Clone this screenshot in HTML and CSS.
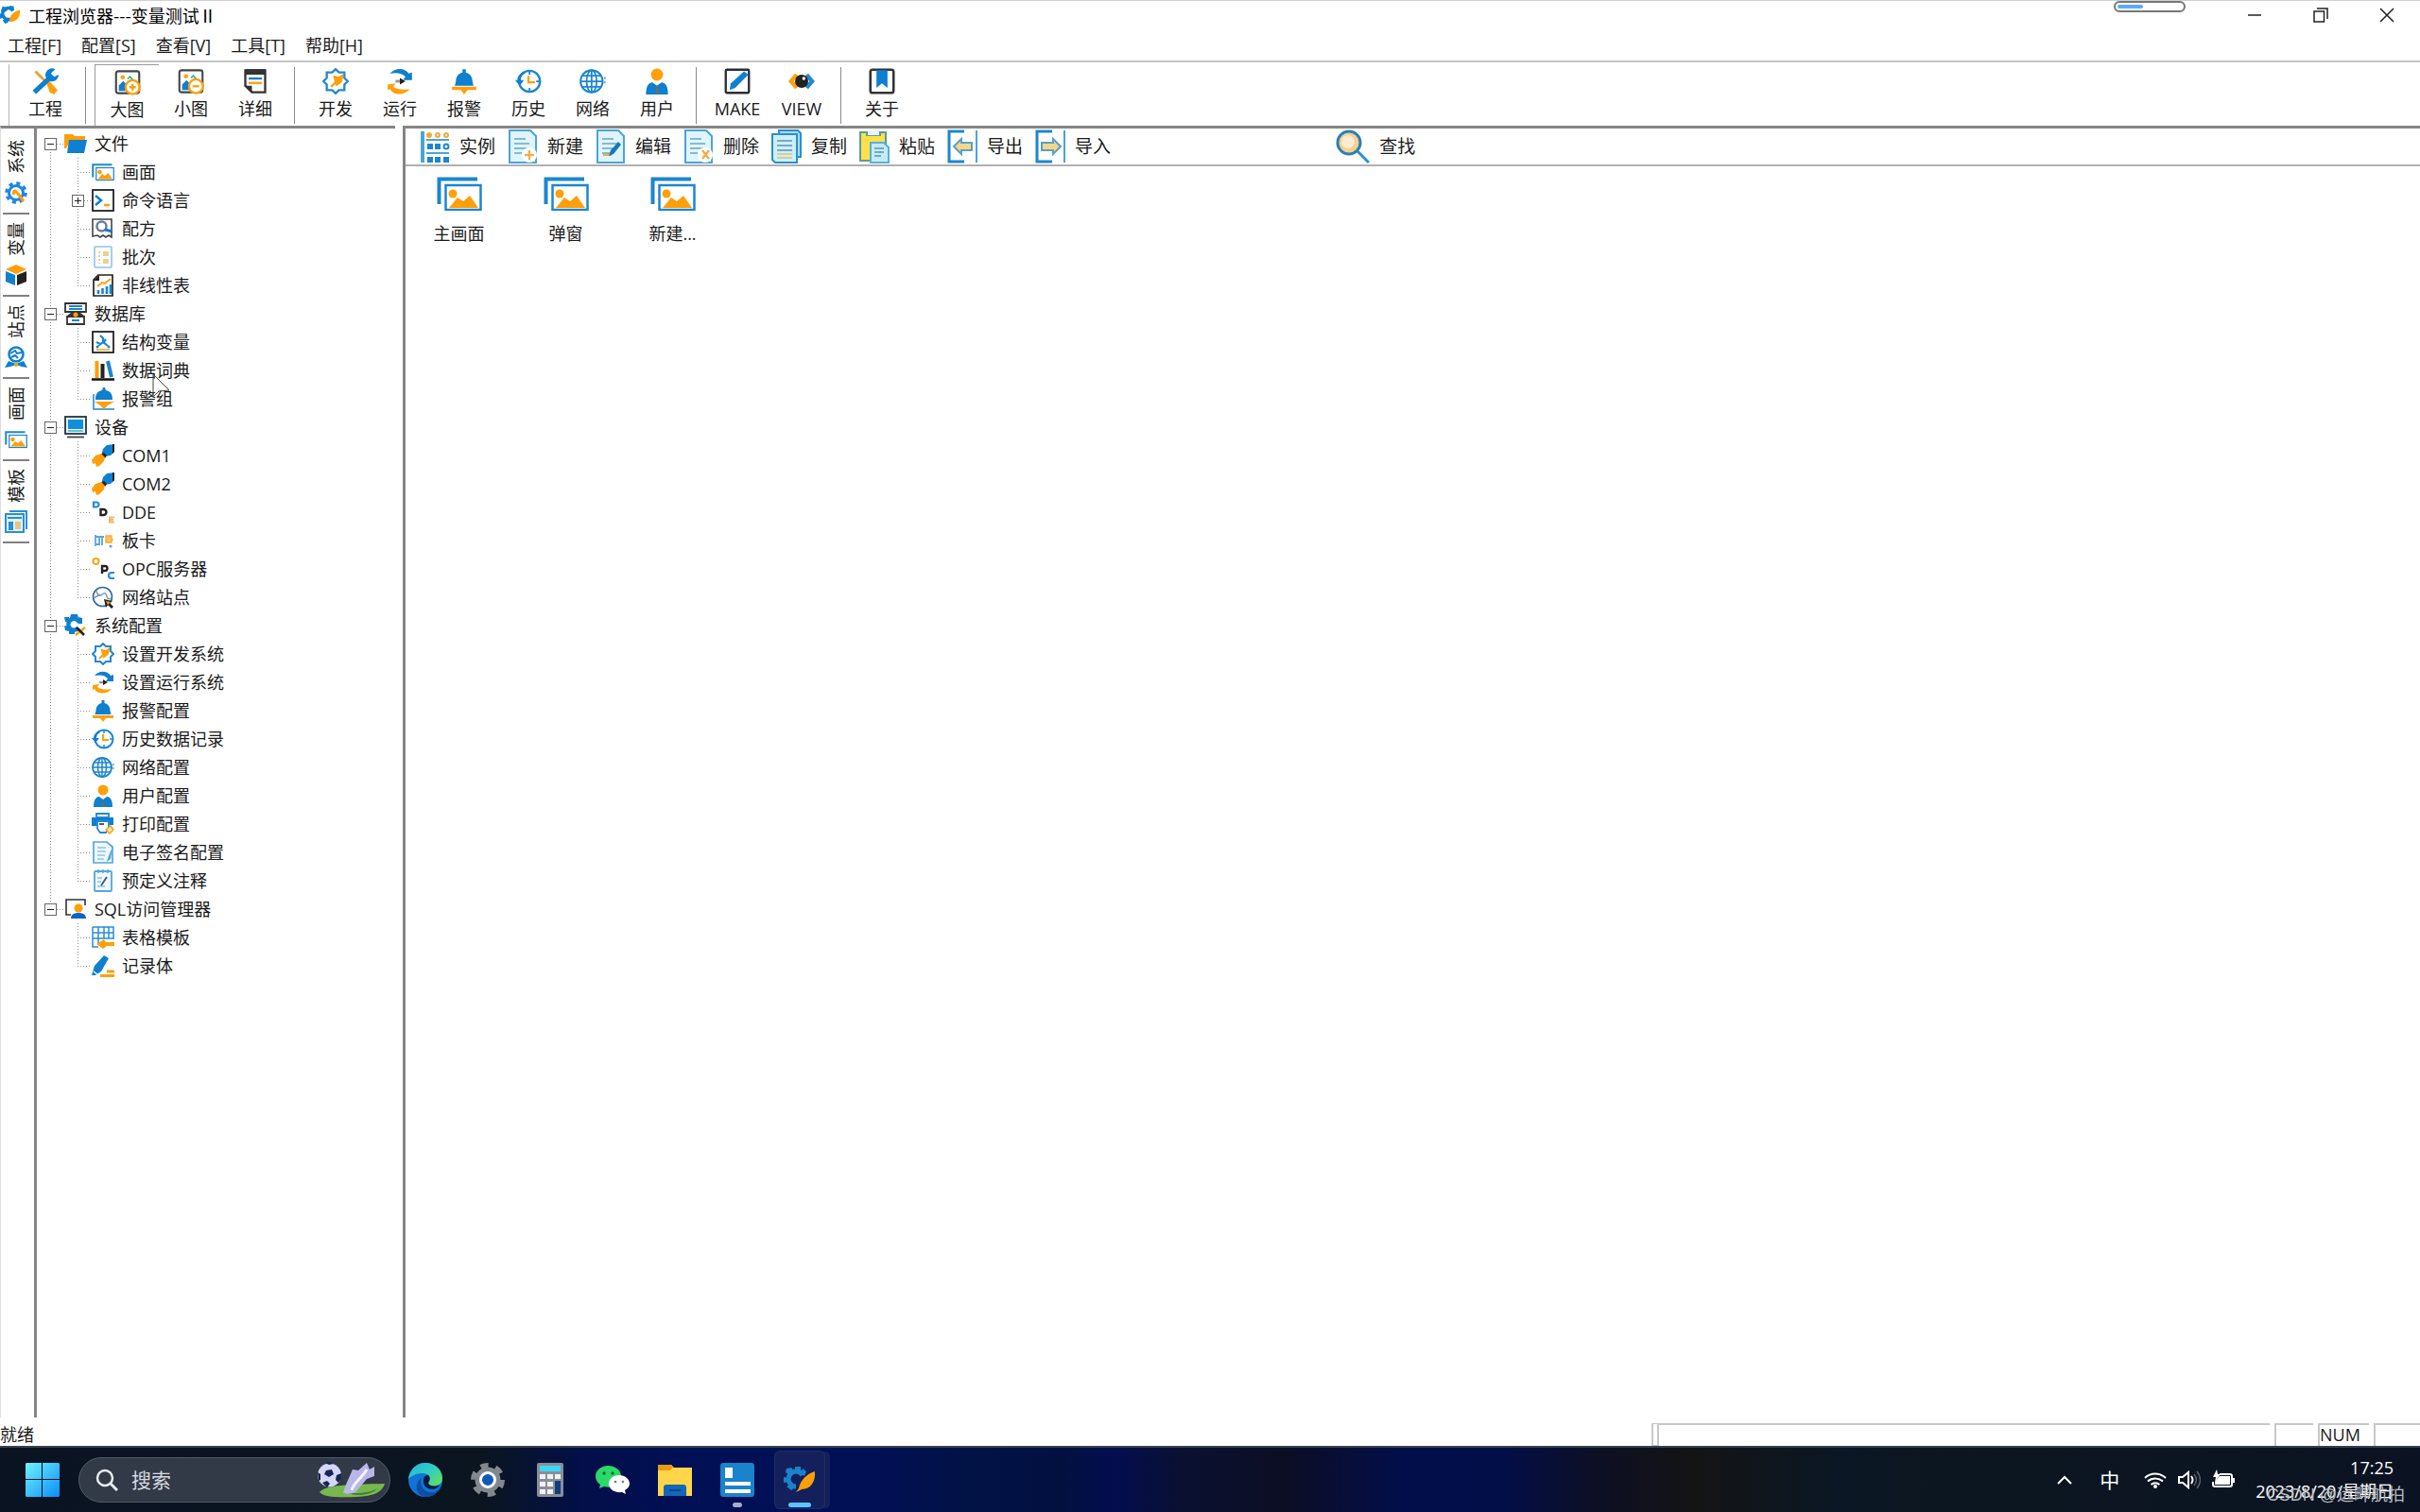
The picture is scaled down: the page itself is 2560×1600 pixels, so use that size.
FILE: index.html
```html
<!DOCTYPE html>
<html lang="zh-CN">
<head>
    <meta charset="UTF-8">
    <meta name="viewport" content="width=device-width, initial-scale=1.0">
    <title>工程浏览器---变量测试Ⅱ</title>
    <link rel="stylesheet" href="styles.css">
</head>
<body>
    <!-- Shared icons -->
    <svg class="sprite" aria-hidden="true">
        <symbol id="logo" viewBox="0 0 24 24">
            <path d="M12 16.500A6.500 6.500 0 1 1 15 7" fill="none" stroke="#0f7fd0" stroke-width="4"/>
            <path d="M3 2l4 1 2 3-4 3-4-2zM0 10l4 1v4l-4 1zM11 1l5 1v4l-5-1zM3 18l4-2 3 4-4 2z" fill="#0f7fd0"/>
            <path d="M23 6c-8 2-12 6-12 14 8 0 13-6 12-14z" fill="#ff9f0a"/>
        </symbol>
        <symbol id="tools" viewBox="0 0 24 24">
            <path d="M3 3l9 9" stroke="#e7a33a" stroke-width="2.500"/>
            <path d="M13 14l3-2 7 8-3 4-4-2z" fill="#ff9f0a"/>
            <path d="M2 22L17 8" stroke="#0f7fd0" stroke-width="4.500"/>
            <path d="M21 1a6 6 0 1 0 3 5l-4 2-3-3z" fill="#0f7fd0"/>
        </symbol>
        <symbol id="pic" viewBox="0 0 24 24">
            <rect x="1.500" y="2" width="21" height="20" rx="2" fill="#fff" stroke="#444" stroke-width="1.800"/>
            <circle cx="7.500" cy="7.500" r="2" fill="#ff9f0a"/>
            <path d="M4 20v-5l4-4 3 3v6z" fill="#0f7fd0"/>
            <path d="M12 9l2-2 3 3" fill="none" stroke="#2b9" stroke-width="1.500"/>
        </symbol>
        <symbol id="pic-plus" viewBox="0 0 24 24">
            <use href="#pic"/>
            <circle cx="16.500" cy="16.500" r="6.300" fill="#fff" stroke="#ff9f0a" stroke-width="2"/>
            <path d="M16.500 13.500v6M13.500 16.500h6" stroke="#ff9f0a" stroke-width="2"/>
        </symbol>
        <symbol id="pic-minus" viewBox="0 0 24 24">
            <use href="#pic"/>
            <circle cx="16.500" cy="16.500" r="6.300" fill="#fff" stroke="#ff9f0a" stroke-width="2"/>
            <path d="M13.500 16.500h6" stroke="#ff9f0a" stroke-width="2"/>
        </symbol>
        <symbol id="notepad" viewBox="0 0 24 24">
            <path d="M3 2h18v20H9l-6-6z" fill="#fff" stroke="#333" stroke-width="2"/>
            <path d="M3 1h18v5H3z" fill="#333"/>
            <path d="M2 16h7v7z" fill="#333"/>
            <path d="M6 9.500h12" stroke="#0f7fd0" stroke-width="2"/>
            <path d="M6 13.500h12" stroke="#ff9f0a" stroke-width="2"/>
        </symbol>
        <symbol id="dev" viewBox="0 0 24 24">
            <path d="M12 1l3 3h5v5l3 3-3 3v5h-5l-3 3-3-3H4v-5l-3-3 3-3V4h5z" fill="#fff" stroke="#2389cf" stroke-width="2"/>
            <path d="M8 17l5-5M12 12l-1-4 4 1 3-2-1 5-4 3z" fill="#ff9f0a" stroke="#ff9f0a" stroke-width="2"/>
        </symbol>
        <symbol id="run" viewBox="0 0 24 24">
            <path d="M3 5C8-1 17 0 20 5l3-1v7h-8l2-3C14 4 8 4 3 5z" fill="#0f7fd0"/>
            <path d="M21 19C16 25 6 25 3 19l-2 1v-5l7-1-2 3c4 3 10 3 15 2z" fill="#ff9f0a"/>
            <path d="M8 12h5" stroke="#999" stroke-width="2.500"/>
            <path d="M12 9l5 3-5 3z" fill="#222"/>
        </symbol>
        <symbol id="bell" viewBox="0 0 24 24">
            <path d="M10.500 1h3v3c4 1 6 4 6 8l1 4h-17l1-4c0-4 2-7 6-8z" fill="#0f7fd0"/>
            <path d="M1 17h22v3h-8l-3 4-3-4H1z" fill="#ff9f0a"/>
        </symbol>
        <symbol id="history" viewBox="0 0 24 24">
            <circle cx="13" cy="12" r="9.500" fill="#fff" stroke="#1c86cf" stroke-width="2"/>
            <path d="M13 3v3M13 18v3M19 12h3" stroke="#1c86cf" stroke-width="1.500"/>
            <path d="M8 3C4 5 2 8 2 11H0l4 5 4-5H5c0-3 1-5 4-6z" fill="#0f7fd0"/>
            <path d="M12 7v6h6" fill="none" stroke="#ff9f0a" stroke-width="2"/>
        </symbol>
        <symbol id="globe" viewBox="0 0 24 24">
            <circle cx="11" cy="12" r="10" fill="#fff" stroke="#1c86cf" stroke-width="1.800"/>
            <ellipse cx="11" cy="12" rx="4.500" ry="10" fill="none" stroke="#1c86cf" stroke-width="1.500"/>
            <path d="M11 2v20M1 12h20M3 7h16M3 17h16" stroke="#1c86cf" stroke-width="1.500"/>
            <path d="M23 8v8" stroke="#7fa9c4" stroke-width="1.500" stroke-dasharray="2 2"/>
        </symbol>
        <symbol id="user" viewBox="0 0 24 24">
            <circle cx="12" cy="6" r="5.500" fill="#ff9f0a"/>
            <path d="M2 24c0-7 2-11 6-11l4 3 4-3c4 0 6 4 6 11z" fill="#0f7fd0"/>
            <path d="M12 15l1.500 8h-3z" fill="#786c50"/>
        </symbol>
        <symbol id="make" viewBox="0 0 24 24">
            <rect x="1.500" y="1.500" width="21" height="21" rx="1" fill="#fff" stroke="#2b2b38" stroke-width="2"/>
            <path d="M5 20l1-6L18 3l4 3L10 18z" fill="#0f7fd0"/>
        </symbol>
        <symbol id="view" viewBox="0 0 24 24">
            <path d="M0 12l6-7 3 2-4 5 4 5-3 2z" fill="#ff9f0a"/>
            <path d="M24 12l-6-7-3 2 4 5-4 5 3 2z" fill="#2389cf"/>
            <circle cx="12" cy="12" r="6" fill="#222"/>
            <circle cx="14" cy="9.500" r="1.500" fill="#fff"/>
        </symbol>
        <symbol id="about" viewBox="0 0 24 24">
            <rect x="1.500" y="1.500" width="21" height="21" rx="2" fill="#fff" stroke="#333" stroke-width="2.200"/>
            <path d="M7 2h10v16l-5-4-5 4z" fill="#0f7fd0"/>
        </symbol>
        <symbol id="folder" viewBox="0 0 24 24">
            <path d="M0 2h9l2 2h11v4H7L2 17H0z" fill="#ff9f0a"/>
            <path d="M5 8h19l-3 14H3z" fill="#0f7fd0"/>
        </symbol>
        <symbol id="pictures" viewBox="0 0 48 36">
            <path d="M2.500 29V2.500H43" fill="none" stroke="#1c86cf" stroke-width="4"/>
            <rect x="9.500" y="9" width="37" height="26" fill="#fff" stroke="#1c86cf" stroke-width="2.500"/>
            <circle cx="17" cy="18" r="4.500" fill="#ff9f0a"/>
            <path d="M13 33l9-11 6 4 7-6 9 13z" fill="#ff9f0a"/>
        </symbol>
        <symbol id="cmd" viewBox="0 0 24 24">
            <rect x="1" y="1" width="22" height="22" fill="#fff" stroke="#222" stroke-width="1.800"/>
            <path d="M4 7l6 5-6 5" fill="none" stroke="#0f7fd0" stroke-width="2.500"/>
            <path d="M13 17h6" stroke="#ff9f0a" stroke-width="2.500"/>
        </symbol>
        <symbol id="recipe" viewBox="0 0 24 24">
            <path d="M1 2h20v19l-3-2-3 2-3-2-3 2-3-2-5 1z" fill="#fff" stroke="#444" stroke-width="1.600"/>
            <circle cx="10.500" cy="9.500" r="5" fill="#fff" stroke="#6a7f96" stroke-width="2.500"/>
            <path d="M14 13l8 2" stroke="#1c76c9" stroke-width="3"/>
        </symbol>
        <symbol id="batch" viewBox="0 0 24 24">
            <rect x="3" y="1" width="18" height="22" rx="1" fill="#fff" stroke="#8cc4ea" stroke-width="1.600"/>
            <path d="M8 6v13" stroke="#e7bd77" stroke-width="1.500" stroke-dasharray="2 2"/>
            <path d="M12 6h6v5h-6zM12 14h6v5h-6z" fill="#edcf95"/>
        </symbol>
        <symbol id="chart" viewBox="0 0 24 24">
            <path d="M7 1h15v22H2V6z" fill="#fff" stroke="#222" stroke-width="1.700"/>
            <path d="M8 1v6H2z" fill="#222"/>
            <path d="M7 21v-4M11.500 21v-6M16 21v-8M20 21V11" stroke="#1c86cf" stroke-width="2.600"/>
            <path d="M6 13l5-4 3 1 6-5" fill="none" stroke="#ff9f0a" stroke-width="2"/>
        </symbol>
        <symbol id="database" viewBox="0 0 24 24">
            <path d="M1 1h22v9H1zM3 15h18v8H3z" fill="#fff" stroke="#333" stroke-width="1.800"/>
            <path d="M5 4h14M5 7h14M8 19h8" stroke="#1c86cf" stroke-width="2"/>
            <path d="M3 14l4-3h10l4 3z" fill="#333"/>
            <circle cx="12" cy="13" r="2.500" fill="#ff9f0a"/>
        </symbol>
        <symbol id="struct" viewBox="0 0 24 24">
            <rect x="1" y="1" width="22" height="22" fill="#fff" stroke="#222" stroke-width="1.800"/>
            <path d="M9 5l3 3v5M7 16l5-4 5 4M5 12l4 2M15 9l-3 4" fill="none" stroke="#1c86cf" stroke-width="2.200"/>
            <circle cx="6" cy="17" r="1.500" fill="#1c86cf"/><circle cx="18" cy="17" r="1.500" fill="#1c86cf"/>
            <path d="M5 20h14" stroke="#ff9f0a" stroke-width="1.500"/>
        </symbol>
        <symbol id="books" viewBox="0 0 24 24">
            <path d="M5.500 2v18" stroke="#ff9f0a" stroke-width="4"/>
            <path d="M11.500 5v15" stroke="#222" stroke-width="4"/>
            <path d="M17 2l4 17" stroke="#1c86cf" stroke-width="4"/>
            <path d="M0 21.500h24" stroke="#111" stroke-width="2.500"/>
        </symbol>
        <symbol id="alarm-group" viewBox="0 0 24 24">
            <path d="M2 7v16h22" fill="none" stroke="#1c86cf" stroke-width="1.500"/>
            <path d="M12 0h2l1 3c5 1 7 4 7 10H4c0-6 2-9 7-10z" fill="#0f7fd0"/>
            <path d="M3 15h21l-7 4-4 4-4-4z" fill="#ff9f0a"/>
        </symbol>
        <symbol id="device" viewBox="0 0 24 24">
            <rect x="1" y="1" width="22" height="18" fill="#e9f5fb" stroke="#234" stroke-width="1.800"/>
            <path d="M4 4h16v10H4z" fill="#0f8fdc"/>
            <path d="M4 16h16" stroke="#3bb3c0" stroke-width="1.500"/>
            <path d="M3 22.500h18" stroke="#444" stroke-width="1.800"/>
        </symbol>
        <symbol id="com" viewBox="0 0 24 24">
            <path d="M10 12l2-7 4-4 8-1v8l-4 4-6 1z" fill="#0f7fd0"/>
            <path d="M22 0h2v8l-2 2zM10 11l3-2 3 3-2 3z" fill="#222"/>
            <path d="M0 17l4-5 6-2 4 4-1 4-5 5-3 1-1-4-3 1z" fill="#ff9f0a"/>
        </symbol>
        <symbol id="dde" viewBox="0 0 24 24">
            <path d="M2 1.500h3a2.500 2.500 0 0 1 0 5H2z" fill="none" stroke="#2389dc" stroke-width="2.200"/>
            <path d="M9.500 9h3a3 3 0 0 1 0 6h-3z" fill="none" stroke="#222" stroke-width="2.400"/>
            <path d="M24 17.500h-5v5h5M19 20h4" fill="none" stroke="#f5b566" stroke-width="2"/>
        </symbol>
        <symbol id="board" viewBox="0 0 24 24">
            <path d="M4 6v12M4 8h9M4 16h5M8 9v6M11 9v8" fill="none" stroke="#5ba5e0" stroke-width="1.800"/>
            <path d="M15 7h6v7h-6zM14 14h2M21 11h2" fill="#f7c170" stroke="#ffac33" stroke-width="1.500"/>
            <circle cx="20" cy="18" r="1.600" fill="#5ba5e0"/>
        </symbol>
        <symbol id="opc" viewBox="0 0 24 24">
            <circle cx="4.500" cy="4" r="3" fill="none" stroke="#f3aa22" stroke-width="2.200"/>
            <path d="M11 17V9h3a2.500 2.500 0 0 1 0 5h-3" fill="none" stroke="#222" stroke-width="2.400"/>
            <path d="M24 16h-3a3 3 0 0 0 0 6h3" fill="none" stroke="#2389dc" stroke-width="2.200"/>
        </symbol>
        <symbol id="net-site" viewBox="0 0 24 24">
            <circle cx="11.500" cy="11.500" r="10" fill="#fff" stroke="#33699a" stroke-width="1.600"/>
            <path d="M5 5c1 6 4 6 6 4s4-2 5 2 4 3 5 1M2 13l7-4" fill="none" stroke="#7d9ab5" stroke-width="1.500"/>
            <path d="M13 14l9 2-3 2 4 4-2 2-4-4-2 3z" fill="#222"/>
            <path d="M15 16l5 1-3 3z" fill="#ff9f0a"/>
        </symbol>
        <symbol id="sys" viewBox="0 0 24 24">
            <path d="M15 14.500A6 6 0 1 1 16 9" fill="none" stroke="#0f7fd0" stroke-width="4.500"/>
            <path d="M7 0h7l1 4H6zM0 3h5v5H1zM0 12l5 1v5l-4-1zM5 17h6v4H5zM15 3l4 1v6h-4z" fill="#0f7fd0"/>
            <path d="M12 22l10-8" stroke="#ff9f0a" stroke-width="2.500"/>
            <path d="M13 14l8 8" stroke="#222" stroke-width="2.500"/>
        </symbol>
        <symbol id="print" viewBox="0 0 24 24">
            <path d="M5 1h13v4H5z" fill="#fff" stroke="#2389cf" stroke-width="1.800"/>
            <path d="M0 5h23v8h-5V9H6v5H0z" fill="#0f7fd0"/>
            <path d="M6 9h12v8l-3 4H9l-3-4z" fill="#fff" stroke="#2389cf" stroke-width="1.800"/>
            <path d="M8 12h5" stroke="#222" stroke-width="1.500"/>
            <path d="M20 14l3 4-4 4-4-4z" fill="#ffe5bb" stroke="#ff9f0a" stroke-width="1.500"/>
        </symbol>
        <symbol id="sign" viewBox="0 0 24 24">
            <path d="M2 1h14l6 5v17H2z" fill="#eef8fe" stroke="#55a8d8" stroke-width="1.700"/>
            <path d="M6 7h9M6 11h9M6 15h8M6 19h7" stroke="#8cc4ea" stroke-width="1.400"/>
            <path d="M22 6l-5 12-1 4 4-3z" fill="#55a8d8"/>
        </symbol>
        <symbol id="note" viewBox="0 0 24 24">
            <rect x="3" y="2" width="18" height="21" rx="1" fill="#eef8fe" stroke="#55a8d8" stroke-width="1.800"/>
            <path d="M7 0v4M12 0v4M17 0v4" stroke="#55a8d8" stroke-width="1.400"/>
            <path d="M6 9h5M6 13h4M6 18h8" stroke="#8cc4ea" stroke-width="1.400"/>
            <path d="M16 8l-6 9" stroke="#456" stroke-width="1.800"/>
        </symbol>
        <symbol id="sql" viewBox="0 0 24 24">
            <path d="M7 18H2V2h20v6" fill="none" stroke="#333" stroke-width="1.600"/>
            <circle cx="15" cy="11" r="4.500" fill="#ff9f0a"/>
            <path d="M7 22c0-4 3-6 8-6s8 2 8 6z" fill="#0f62c8"/>
        </symbol>
        <symbol id="table-tpl" viewBox="0 0 24 24">
            <path d="M1 1h22v13M1 1v21h6M1 7h22M1 13h22M7 1v18M13 1v12M18 1v12" fill="none" stroke="#2a8fd0" stroke-width="1.500"/>
            <path d="M5 19l8-5 2 3h9v4h-8l-4 3z" fill="#ff9f0a"/>
        </symbol>
        <symbol id="record" viewBox="0 0 24 24">
            <path d="M0 22l3-10L13 1l5 3-8 14-6 4z" fill="#0f7fd0"/>
            <path d="M2 18l5 4" stroke="#dff" stroke-width="1.500"/>
            <path d="M16 18h8M9 22.500h15" stroke="#ff9f0a" stroke-width="2.800"/>
        </symbol>
        <symbol id="sys-gear" viewBox="0 0 24 24">
            <circle cx="12" cy="12" r="10" fill="none" stroke="#1c86e8" stroke-width="3.500" stroke-dasharray="4 3.850"/>
            <circle cx="12" cy="12" r="7.500" fill="#fff" stroke="#1c86e8" stroke-width="3"/>
            <path d="M10 9l4 4 6 8M10 9l-1 5" fill="none" stroke="#ff9f0a" stroke-width="3"/>
        </symbol>
        <symbol id="cube" viewBox="0 0 24 24">
            <path d="M12 1l11 5-11 5L1 6z" fill="#ff9f0a"/>
            <path d="M1 8l10 4v11L1 19z" fill="#0f7fd0"/>
            <path d="M23 8l-10 4v11l10-4z" fill="#222"/>
        </symbol>
        <symbol id="station" viewBox="0 0 24 24">
            <circle cx="12" cy="9" r="7.500" fill="#fff" stroke="#0f7fd0" stroke-width="2.500"/>
            <path d="M6 8l5-3 2 3 5-1M7 12l4-2 3 3" fill="none" stroke="#0f7fd0" stroke-width="2"/>
            <path d="M0 23l4-7 8 3 8-3 4 7-6-1-6-2-6 2z" fill="#0f7fd0"/>
            <circle cx="12" cy="20" r="2" fill="#ff9f0a"/>
        </symbol>
        <symbol id="template" viewBox="0 0 24 24">
            <path d="M5 1h18v19" fill="none" stroke="#2a8fd0" stroke-width="2"/>
            <rect x="1" y="4" width="19" height="19" fill="#dff2fc" stroke="#2a8fd0" stroke-width="2"/>
            <path d="M3 8h15" stroke="#2a8fd0" stroke-width="2"/>
            <path d="M4 12h5v9H4z" fill="#2a8fd0"/>
            <path d="M11 12h6v8h-6z" fill="#e8c583"/>
        </symbol>
        <symbol id="page" viewBox="0 0 32 36">
            <path d="M2 1h22l6 6v28H2z" fill="#dff5fd" stroke="#4aa5d6" stroke-width="2"/>
            <path d="M7 10h12M7 15h16M7 20h14M7 25h8" stroke="#69a5bf" stroke-width="1.500"/>
        </symbol>
        <symbol id="list-act" viewBox="0 0 32 36">
            <path d="M3 2v33" stroke="#4aa5d6" stroke-width="4"/>
            <path d="M7 11h24M7 25h24" stroke="#4aa5d6" stroke-width="2"/>
            <g fill="none" stroke="#f0ac3e" stroke-width="2"><circle cx="10" cy="6" r="2" fill="#ff9f0a"/><circle cx="19" cy="6" r="2"/><circle cx="28" cy="6" r="2"/></g>
            <path d="M8 15h6v6H8zM16 15h6v6h-6zM8 29h6v6H8zM16 29h6v6h-6zM25 29h6v6h-6z" fill="#1c86cf"/>
            <circle cx="28" cy="18" r="2.500" fill="none" stroke="#1c86cf" stroke-width="2"/>
        </symbol>
        <symbol id="new-act" viewBox="0 0 32 36">
            <use href="#page"/>
            <circle cx="23" cy="27" r="8" fill="#fff"/>
            <path d="M23 22v10M18 27h10" stroke="#f0ac3e" stroke-width="2.200"/>
        </symbol>
        <symbol id="edit-act" viewBox="0 0 32 36">
            <use href="#page"/>
            <path d="M8 27h9" stroke="#f0ac3e" stroke-width="2"/>
            <path d="M14 28l2-6 8-9 3 3-8 10z" fill="#1c76b8"/>
        </symbol>
        <symbol id="del-act" viewBox="0 0 32 36">
            <use href="#page"/>
            <circle cx="23" cy="27" r="8" fill="#fff"/>
            <path d="M20 22l7 9M27 22l-7 9" stroke="#f0ac3e" stroke-width="2.200"/>
        </symbol>
        <symbol id="copy-act" viewBox="0 0 32 36">
            <path d="M8 1h20l3 3v25H8z" fill="#a8dcf5" stroke="#2a8fd0" stroke-width="2"/>
            <path d="M1 5h26v30H4l-3-3z" fill="#cdeffb" stroke="#2a8fd0" stroke-width="2"/>
            <path d="M6 12h16M6 17h16M6 22h16" stroke="#5d93ad" stroke-width="1.500"/>
            <path d="M6 26h16M6 30h16" stroke="#d9cf93" stroke-width="2"/>
        </symbol>
        <symbol id="paste-act" viewBox="0 0 32 36">
            <path d="M1 3h7v3h14V3h6v30H1z" fill="#ffe04a" stroke="#5a9d96" stroke-width="2"/>
            <path d="M9 1h12v5H9z" fill="#e9f5fb"/>
            <path d="M12 14h14l5 5v16H12z" fill="#c5ebfa" stroke="#5ab0da" stroke-width="2"/>
            <path d="M16 20h10M16 24h10M16 28h7" stroke="#5d93ad" stroke-width="1.500"/>
        </symbol>
        <symbol id="export-act" viewBox="0 0 32 36">
            <path d="M18 2H2v32h16" fill="none" stroke="#1c86cf" stroke-width="3"/>
            <path d="M31 1v34" stroke="#4aa5d6" stroke-width="2"/>
            <path d="M7 18l8-8v4h11v8H15v4z" fill="#f5d68c" stroke="#5ba0c4" stroke-width="2"/>
        </symbol>
        <symbol id="import-act" viewBox="0 0 32 36">
            <path d="M18 2H2v32h16" fill="none" stroke="#1c86cf" stroke-width="3"/>
            <path d="M31 1v34" stroke="#4aa5d6" stroke-width="2"/>
            <path d="M27 18l-8-8v4H7v8h12v4z" fill="#f5d68c" stroke="#5ba0c4" stroke-width="2"/>
        </symbol>
        <symbol id="find-act" viewBox="0 0 36 36">
            <path d="M23 23l12 12" stroke="#2a8fd0" stroke-width="3"/>
            <circle cx="14" cy="14" r="12" fill="#f9cf8d" stroke="#2a80b8" stroke-width="3"/>
            <circle cx="13" cy="13" r="7" fill="#fdecd2"/>
        </symbol>
    </svg>

    <div class="app">
        <header class="title-bar">
            <svg class="title-logo"><use href="#logo"/></svg>
            <h1>工程浏览器---变量测试Ⅱ</h1>
            <div class="progress-pill"><span></span></div>
            <div class="window-buttons">
                <button aria-label="最小化"><svg viewBox="0 0 16 16"><path d="M1 8h14"/></svg></button>
                <button aria-label="还原"><svg viewBox="0 0 16 16"><path d="M1 4h10.500v11H1zM4 1h11v11"/></svg></button>
                <button aria-label="关闭"><svg viewBox="0 0 16 16"><path d="M1 1l14 14M15 1L1 15"/></svg></button>
            </div>
        </header>

        <nav class="menu-bar">
            <button>工程[F]</button>
            <button>配置[S]</button>
            <button>查看[V]</button>
            <button>工具[T]</button>
            <button>帮助[H]</button>
        </nav>

        <div class="toolbar">
            <div class="tool-group">
                <button class="tool"><svg><use href="#tools"/></svg>工程</button>
            </div>
            <div class="tool-group">
                <button class="tool pressed"><svg><use href="#pic-plus"/></svg>大图</button>
                <button class="tool"><svg><use href="#pic-minus"/></svg>小图</button>
                <button class="tool"><svg><use href="#notepad"/></svg>详细</button>
            </div>
            <div class="tool-group">
                <button class="tool"><svg><use href="#dev"/></svg>开发</button>
                <button class="tool"><svg><use href="#run"/></svg>运行</button>
                <button class="tool"><svg><use href="#bell"/></svg>报警</button>
                <button class="tool"><svg><use href="#history"/></svg>历史</button>
                <button class="tool"><svg><use href="#globe"/></svg>网络</button>
                <button class="tool"><svg><use href="#user"/></svg>用户</button>
            </div>
            <div class="tool-group">
                <button class="tool"><svg><use href="#make"/></svg>MAKE</button>
                <button class="tool"><svg><use href="#view"/></svg>VIEW</button>
            </div>
            <div class="tool-group">
                <button class="tool"><svg><use href="#about"/></svg>关于</button>
            </div>
        </div>

        <main class="workspace">
            <div class="side-tabs">
                <button class="side-tab"><span>系统</span><svg><use href="#sys-gear"/></svg></button>
                <button class="side-tab"><span>变量</span><svg><use href="#cube"/></svg></button>
                <button class="side-tab"><span>站点</span><svg><use href="#station"/></svg></button>
                <button class="side-tab"><span>画面</span><svg><use href="#pictures"/></svg></button>
                <button class="side-tab"><span>模板</span><svg><use href="#template"/></svg></button>
            </div>

            <div class="tree-panel">
                <ul class="tree">
                    <li class="branch">
                        <div class="row"><button class="toggle" aria-label="折叠"></button><i class="twig"></i><svg><use href="#folder"/></svg><a href="#">文件</a></div>
                        <ul>
                            <li class="row"><i class="twig"></i><svg><use href="#pictures"/></svg><a href="#">画面</a></li>
                            <li class="row nested"><button class="toggle closed" aria-label="展开"></button><i class="twig"></i><svg><use href="#cmd"/></svg><a href="#">命令语言</a></li>
                            <li class="row"><i class="twig"></i><svg><use href="#recipe"/></svg><a href="#">配方</a></li>
                            <li class="row"><i class="twig"></i><svg><use href="#batch"/></svg><a href="#">批次</a></li>
                            <li class="row"><i class="twig"></i><svg><use href="#chart"/></svg><a href="#">非线性表</a></li>
                        </ul>
                    </li>
                    <li class="branch">
                        <div class="row"><button class="toggle" aria-label="折叠"></button><i class="twig"></i><svg><use href="#database"/></svg><a href="#">数据库</a></div>
                        <ul>
                            <li class="row"><i class="twig"></i><svg><use href="#struct"/></svg><a href="#">结构变量</a></li>
                            <li class="row"><i class="twig"></i><svg><use href="#books"/></svg><a href="#">数据词典</a>
                                <svg class="cursor" viewBox="0 0 20 28"><path d="M1 1v24l6-6 11-1z"/></svg>
                            </li>
                            <li class="row"><i class="twig"></i><svg><use href="#alarm-group"/></svg><a href="#">报警组</a></li>
                        </ul>
                    </li>
                    <li class="branch">
                        <div class="row"><button class="toggle" aria-label="折叠"></button><i class="twig"></i><svg><use href="#device"/></svg><a href="#">设备</a></div>
                        <ul>
                            <li class="row"><i class="twig"></i><svg><use href="#com"/></svg><a href="#">COM1</a></li>
                            <li class="row"><i class="twig"></i><svg><use href="#com"/></svg><a href="#">COM2</a></li>
                            <li class="row"><i class="twig"></i><svg><use href="#dde"/></svg><a href="#">DDE</a></li>
                            <li class="row"><i class="twig"></i><svg><use href="#board"/></svg><a href="#">板卡</a></li>
                            <li class="row"><i class="twig"></i><svg><use href="#opc"/></svg><a href="#">OPC服务器</a></li>
                            <li class="row"><i class="twig"></i><svg><use href="#net-site"/></svg><a href="#">网络站点</a></li>
                        </ul>
                    </li>
                    <li class="branch">
                        <div class="row"><button class="toggle" aria-label="折叠"></button><i class="twig"></i><svg><use href="#sys"/></svg><a href="#">系统配置</a></div>
                        <ul>
                            <li class="row"><i class="twig"></i><svg><use href="#dev"/></svg><a href="#">设置开发系统</a></li>
                            <li class="row"><i class="twig"></i><svg><use href="#run"/></svg><a href="#">设置运行系统</a></li>
                            <li class="row"><i class="twig"></i><svg><use href="#bell"/></svg><a href="#">报警配置</a></li>
                            <li class="row"><i class="twig"></i><svg><use href="#history"/></svg><a href="#">历史数据记录</a></li>
                            <li class="row"><i class="twig"></i><svg><use href="#globe"/></svg><a href="#">网络配置</a></li>
                            <li class="row"><i class="twig"></i><svg><use href="#user"/></svg><a href="#">用户配置</a></li>
                            <li class="row"><i class="twig"></i><svg><use href="#print"/></svg><a href="#">打印配置</a></li>
                            <li class="row"><i class="twig"></i><svg><use href="#sign"/></svg><a href="#">电子签名配置</a></li>
                            <li class="row"><i class="twig"></i><svg><use href="#note"/></svg><a href="#">预定义注释</a></li>
                        </ul>
                    </li>
                    <li class="branch">
                        <div class="row"><button class="toggle" aria-label="折叠"></button><i class="twig"></i><svg><use href="#sql"/></svg><a href="#">SQL访问管理器</a></div>
                        <ul>
                            <li class="row"><i class="twig"></i><svg><use href="#table-tpl"/></svg><a href="#">表格模板</a></li>
                            <li class="row"><i class="twig"></i><svg><use href="#record"/></svg><a href="#">记录体</a></li>
                        </ul>
                    </li>
                </ul>
            </div>

            <section class="content">
                <div class="actions">
                    <button class="action"><svg><use href="#list-act"/></svg>实例</button>
                    <button class="action"><svg><use href="#new-act"/></svg>新建</button>
                    <button class="action"><svg><use href="#edit-act"/></svg>编辑</button>
                    <button class="action"><svg><use href="#del-act"/></svg>删除</button>
                    <button class="action"><svg><use href="#copy-act"/></svg>复制</button>
                    <button class="action"><svg><use href="#paste-act"/></svg>粘贴</button>
                    <button class="action"><svg><use href="#export-act"/></svg>导出</button>
                    <button class="action"><svg><use href="#import-act"/></svg>导入</button>
                    <button class="action find"><svg><use href="#find-act"/></svg>查找</button>
                </div>
                <div class="files">
                    <a class="file" href="#"><svg><use href="#pictures"/></svg>主画面</a>
                    <a class="file" href="#"><svg><use href="#pictures"/></svg>弹窗</a>
                    <a class="file" href="#"><svg><use href="#pictures"/></svg>新建...</a>
                </div>
            </section>
        </main>

        <footer class="status-bar">
            <span class="status-text">就绪</span>
            <span class="pane wide"></span>
            <span class="pane caps"></span>
            <span class="pane num">NUM</span>
            <span class="pane scroll"></span>
        </footer>
    </div>

    <div class="taskbar">
        <button class="start" aria-label="开始">
            <svg viewBox="0 0 36 36">
                <defs><linearGradient id="win" x1="0" y1="0" x2="1" y2="1"><stop offset="0" stop-color="#6ff3ff"/><stop offset="1" stop-color="#0a8dfa"/></linearGradient></defs>
                <path d="M1 0h16v17H0V1zM18 0h17l1 1v16H18zM0 18h17v18H1l-1-1zM18 18h18v17l-1 1H18z" fill="url(#win)"/>
            </svg>
        </button>
        <label class="search">
            <svg class="glass" viewBox="0 0 24 24"><circle cx="10" cy="10" r="8" fill="none" stroke="#e8ebf0" stroke-width="2.500"/><path d="M16 16l7 7" stroke="#e8ebf0" stroke-width="3"/></svg>
            <input type="text" placeholder="搜索" aria-label="搜索">
            <svg class="football" viewBox="0 0 72 38">
                <path d="M2 32c8-8 30-8 69-9-3 9-10 13-30 14S6 37 2 32z" fill="#78b94f"/>
                <path d="M26 30c14 6 30 2 38-2-8 8-28 10-38 2z" fill="#467f38"/>
                <circle cx="12.500" cy="14" r="12.500" fill="#d5d6fa"/>
                <path d="M9 9l6-1 2 5-5 3-5-3zM0 11l3 2v6l-2 1zM5 22l5-2 3 3-3 4zM20 14l5-2v6l-3 4-3-3zM8 1l5-1 4 2-5 1z" fill="#172554"/>
                <path d="M27 32c3-9 7-17 10-24l6 1 9-8 3 7 5-3v10l-8 3-11 13c-3 3-11 4-14 1z" fill="#b9b7e8"/>
                <path d="M36 30c2-8 10-12 16-22" fill="none" stroke="#f4f4ff" stroke-width="3"/>
            </svg>
        </label>
        <div class="apps">
            <button class="task" aria-label="Edge">
                <svg viewBox="0 0 36 36">
                    <defs><linearGradient id="edge" x1="0" y1="0" x2="1" y2="1"><stop offset="0" stop-color="#1fb4e6"/><stop offset=".5" stop-color="#30cfc0"/><stop offset="1" stop-color="#6fe04a"/></linearGradient></defs>
                    <circle cx="18" cy="18" r="18" fill="#1173d4"/>
                    <path d="M0 17C2 6 9 0 18 0c11 0 18 8 18 16 0 6-4 8-9 8-4 0-7-2-5-4 3-5-1-9-7-9-7 0-12 3-15 6z" fill="url(#edge)"/>
                    <path d="M14 16c-3 8 3 16 11 15 4 0 6-2 9-5-2 5-8 10-16 10C8 35 5 22 14 16z" fill="#0d4fa5"/>
                    <path d="M21 13c3 3 1 6 0 8 0 3 5 5 12 3-5 7-18 4-17-5 0-4 2-6 5-6z" fill="#0b1a3c"/>
                </svg>
            </button>
            <button class="task" aria-label="设置">
                <svg viewBox="0 0 36 36">
                    <circle cx="18" cy="18" r="15" fill="none" stroke="#83888f" stroke-width="6" stroke-dasharray="8 7.700"/>
                    <circle cx="18" cy="18" r="13.500" fill="#83888f"/>
                    <circle cx="18" cy="18" r="7.500" fill="#0f59b8" stroke="#fff" stroke-width="3"/>
                </svg>
            </button>
            <button class="task" aria-label="计算器">
                <svg viewBox="0 0 36 36">
                    <rect x="4" width="28" height="36" rx="2" fill="#8a8f97"/>
                    <path d="M7 3h22v6H7z" fill="#3fd6f5"/>
                    <path d="M7 12h6v5H7zM15 12h6v5h-6zM23 12h6v5h-6zM7 20h6v5H7zM15 20h6v5h-6zM7 28h6v5H7zM15 28h6v5h-6z" fill="#f0f2f5"/>
                    <path d="M23 19h6v14h-6z" fill="#123f7c"/>
                </svg>
            </button>
            <button class="task" aria-label="微信">
                <svg viewBox="0 0 36 36">
                    <path d="M13 3C6 3 0 8 0 14c0 4 2 7 5 9l-1 4 5-2c12 3 18-4 18-11S20 3 13 3z" fill="#2bd968"/>
                    <circle cx="9" cy="11" r="1.700" fill="#116b35"/><circle cx="18" cy="11" r="1.700" fill="#116b35"/>
                    <path d="M25 13c-6 0-11 4-11 9s5 10 14 9l4 2-1-4c3-2 5-4 5-7 0-5-5-9-11-9z" fill="#fff"/>
                    <circle cx="21" cy="20" r="1.300" fill="#777"/><circle cx="29" cy="20" r="1.300" fill="#777"/>
                </svg>
            </button>
            <button class="task" aria-label="文件资源管理器">
                <svg viewBox="0 0 36 36">
                    <path d="M0 2h14l3 3h19v30H0z" fill="#ffd54a"/>
                    <path d="M0 2h13l3 3-3 3H0z" fill="#e79c12"/>
                    <path d="M6 35V26c0-2 1-3 3-3h18c2 0 3 1 3 3v9z" fill="#1466ba"/>
                    <path d="M12 29h12" stroke="#0c478c" stroke-width="2"/>
                </svg>
            </button>
            <button class="task running" aria-label="工程管理器">
                <svg viewBox="0 0 36 36">
                    <rect width="36" height="36" rx="3" fill="#1b82cc"/>
                    <path d="M5 5h8v11H5zM5 20h27v4H5zM5 28h27v4H5z" fill="#fff"/>
                </svg>
            </button>
            <button class="task active" aria-label="工程浏览器">
                <svg viewBox="0 0 36 36">
                    <path d="M14 25a8 8 0 1 1 7-12" fill="none" stroke="#1b82cc" stroke-width="5"/>
                    <path d="M4 6l5-1 3 4-5 4-4-3zM1 15l6 1v4l-6 1zM4 25l5-3 4 4-4 3zM13 4h6v6h-6zM21 6l4 3-2 5-4-3z" fill="#1b82cc"/>
                    <path d="M34 9c-9 3-15 9-17 18l-3 4 6-3c10 0 15-9 14-19z" fill="#ff9f0a"/>
                </svg>
            </button>
        </div>
        <div class="tray">
            <button class="chevron" aria-label="显示隐藏的图标"><svg viewBox="0 0 18 12"><path d="M2 10l7-7 7 7" fill="none" stroke="#fff" stroke-width="2"/></svg></button>
            <button class="ime">中</button>
            <button class="status-icons" aria-label="网络、音量、电池">
                <svg viewBox="0 0 24 24"><g fill="none" stroke="#fff" stroke-width="2"><path d="M1 10a16 16 0 0 1 22 0M4 13.500a12 12 0 0 1 16 0M7.500 17a7 7 0 0 1 9 0"/></g><circle cx="12" cy="19" r="2" fill="#fff"/></svg>
                <svg viewBox="0 0 24 24"><path d="M1 9h4l6-5v16l-6-5H1z" fill="none" stroke="#fff" stroke-width="2"/><path d="M14 8q3 4 0 8" fill="none" stroke="#fff" stroke-width="2"/><path d="M17 6q5 6 0 12M20 3q7 9 0 18" fill="none" stroke="#59616e" stroke-width="1.500"/></svg>
                <svg viewBox="0 0 24 24"><path d="M8 6h11q2 0 2 2v9q0 2-2 2H3q-2 0-2-2v-3" fill="none" stroke="#fff" stroke-width="2"/><path d="M8 8h11v9H3v-3zM22 10h2v5h-2zM5 1L1 9h3l-1 5 6-8H6z" fill="#fff"/></svg>
            </button>
            <div class="clock">
                <time>17:25</time>
                <time>2023/8/20/星期日</time>
                <span class="watermark">CSDN @远畔航拍</span>
            </div>
        </div>
    </div>
</body>
</html>
```
FILE: styles.css
```css
* {
    box-sizing: border-box;
}

body {
    margin: 0;
    height: 100vh;
    display: flex;
    flex-direction: column;
    background: #fff;
    color: #1a1a1a;
    font-family: "Open Sans", "Noto Sans CJK SC", sans-serif;
    font-size: 18px;
    line-height: 24px;
    overflow: hidden;
}

button {
    margin: 0;
    padding: 0;
    border: none;
    background: none;
    color: inherit;
    font: inherit;
}

a {
    color: inherit;
    text-decoration: none;
}

ul {
    list-style: none;
    margin: 0;
    padding: 0;
}

svg {
    flex: none;
    display: block;
}

.sprite {
    display: none;
}

.app {
    flex: 1;
    min-height: 0;
    display: flex;
    flex-direction: column;
    border-top: 1px solid #d0d0d0;
}

/* Title and menu */
.title-bar {
    height: 30px;
    display: flex;
    align-items: center;
    justify-content: space-between;
}

.title-logo {
    width: 22px;
    height: 22px;
    margin-right: 8px;
}

.title-bar h1 {
    flex: 1;
    margin: 0;
    font-family: "Noto Sans CJK SC", sans-serif;
    font-size: 18px;
    font-weight: normal;
    color: #000;
}

.progress-pill {
    align-self: flex-start;
    width: 76px;
    height: 12px;
    margin-right: 38px;
    padding: 2px;
    border: 2px solid #777;
    border-radius: 6px;
}

.progress-pill span {
    display: block;
    width: 40%;
    height: 4px;
    border-radius: 2px;
    background: #5aabfa;
}

.window-buttons {
    display: flex;
}

.window-buttons button {
    width: 70px;
    height: 28px;
    display: flex;
    align-items: center;
    justify-content: center;
}

.window-buttons svg {
    width: 16px;
    height: 16px;
    fill: none;
    stroke: #222;
    stroke-width: 1.5;
}

.menu-bar {
    height: 33px;
    display: flex;
    align-items: center;
    gap: 21px;
    padding-left: 8px;
}

/* Main toolbar */
.toolbar {
    display: flex;
    height: 69px;
    padding: 2px 0 0 9px;
    border-top: 2px solid #c4c4c4;
}

.tool-group {
    display: flex;
    margin-right: 9px;
    padding-right: 8px;
    background: linear-gradient(#8a8a8a, #8a8a8a) no-repeat right 3px / 1px 60px;
}

.tool-group:first-child {
    padding: 0 9px 0 4px;
    border-left: 1px solid #b5b5b5;
}

.tool-group:last-child {
    background: none;
}

.tool {
    width: 68px;
    display: flex;
    flex-direction: column;
    align-items: center;
    gap: 3px;
    padding-top: 4px;
}

.tool svg {
    width: 28px;
    height: 28px;
}

.tool.pressed {
    border: 1px solid #9a9a9a;
    border-width: 1px 0 0 1px;
}

/* Workspace */
.workspace {
    flex: 1;
    min-height: 0;
    display: flex;
}

.side-tabs {
    width: 36px;
    padding-top: 4px;
    border-top: 3px solid #858585;
    border-left: 1px solid #ddd;
}

.side-tab {
    width: 28px;
    height: 87px;
    margin-left: 2px;
    padding: 8px 0 9px;
    display: flex;
    flex-direction: column;
    align-items: center;
    justify-content: space-between;
    border-bottom: 2px solid #808080;
}

.side-tab span {
    writing-mode: vertical-rl;
    text-orientation: sideways;
    transform: rotate(180deg);
}

.side-tab svg {
    width: 24px;
    height: 24px;
}

.tree-panel {
    width: 382px;
    margin-right: 8px;
    padding: 1px 0 0 8px;
    border-top: 3px solid #858585;
    border-left: 3px solid #858585;
}

.branch {
    background: repeating-linear-gradient(#8c8c8c 0 1px, transparent 1px 3px) no-repeat 6px 0 / 1px 100%;
}

.branch:first-child {
    background-position: 6px 15px;
}

.branch:last-child {
    background-size: 1px 15px;
}

.branch ul {
    margin-left: 35px;
    background: repeating-linear-gradient(#8c8c8c 0 1px, transparent 1px 3px) no-repeat 0 0 / 1px calc(100% - 15px);
}

.row {
    position: relative;
    height: 30px;
    display: flex;
    align-items: center;
}

.row svg {
    width: 24px;
    height: 24px;
    margin-right: 8px;
}

.twig {
    width: 15px;
    height: 1px;
    background: repeating-linear-gradient(90deg, #8c8c8c 0 1px, transparent 1px 3px);
}

.toggle {
    width: 13px;
    height: 13px;
    border: 1px solid #666;
    background: linear-gradient(#222, #222) no-repeat center / 7px 1px #fff;
}

.toggle.closed {
    background: linear-gradient(#222, #222) no-repeat center / 7px 1px, linear-gradient(#222, #222) no-repeat center / 1px 7px, #fff;
}

.toggle + .twig {
    width: 8px;
}

.nested {
    margin-left: -6px;
}

.row .cursor {
    position: absolute;
    left: 79px;
    top: 18px;
    width: 20px;
    height: 28px;
    z-index: 1;
    fill: none;
    stroke: #444;
    stroke-width: 1;
}

.content {
    flex: 1;
    border-top: 3px solid #858585;
    border-left: 3px solid #858585;
}

.actions {
    height: 40px;
    display: flex;
    align-items: center;
    gap: 13px;
    padding-left: 15px;
    border-bottom: 2px solid #b0b0b0;
    font-size: 19px;
}

.action {
    display: flex;
    align-items: center;
    gap: 10px;
}

.action svg {
    width: 32px;
    height: 36px;
}

.action.find {
    margin-left: 225px;
}

.action.find svg {
    width: 36px;
}

.files {
    display: flex;
    padding-top: 11px;
}

.file {
    width: 113px;
    display: flex;
    flex-direction: column;
    align-items: center;
    gap: 12px;
}

.file svg {
    width: 48px;
    height: 36px;
}

/* Status bar */
.status-bar {
    height: 30px;
    display: flex;
    align-items: flex-end;
    gap: 5px;
}

.status-text {
    flex: 1;
}

.pane {
    height: 24px;
    border: 2px solid #c8c8c8;
    border-width: 2px 0 0 2px;
}

.pane.wide {
    width: 648px;
    box-shadow: -5px 0 0 -1px #fff, -6px 0 0 0 #c8c8c8;
}

.pane.caps {
    width: 41px;
}

.pane.num {
    width: 54px;
    line-height: 20px;
}

.pane.scroll {
    width: 49px;
}

/* Taskbar */
.taskbar {
    height: 70px;
    display: flex;
    align-items: center;
    padding: 0 0 0 27px;
    border-top: 2px solid #39414b;
    background: linear-gradient(90deg, #0a1322 0%, #0a1520 20%, #020f48 24%, #010f55 28%, #010f55 36%, #011245 40%, #021040 44%, #030d50 46%, #0a1030 49%, #0c0e24 53%, #020e4a 58%, #020e48 62%, #0d0f24 66%, #141414 70%, #0a1724 76%, #0c1620 80%, #0b1322 100%);
    color: #fff;
}

.start svg {
    width: 36px;
    height: 36px;
}

.search {
    width: 330px;
    height: 48px;
    margin-left: 20px;
    padding: 0 4px 0 17px;
    display: flex;
    align-items: center;
    gap: 14px;
    border: 1px solid #525a66;
    border-radius: 24px;
    background: #323a47;
}

.glass {
    width: 24px;
    height: 24px;
}

.search input {
    flex: 1;
    min-width: 0;
    padding: 0;
    border: none;
    outline: none;
    background: none;
    color: #fff;
    font: inherit;
    font-size: 21px;
}

.search input::placeholder {
    color: #d5d9e0;
}

.football {
    width: 72px;
    height: 38px;
}

.apps {
    display: flex;
    gap: 14px;
    margin-left: 11px;
}

.task {
    width: 52px;
    height: 60px;
    display: flex;
    flex-direction: column;
    align-items: center;
    padding-top: 12px;
    border-radius: 5px;
}

.task svg {
    width: 36px;
    height: 36px;
}

.task::after {
    content: "";
    height: 5px;
    margin-top: 6px;
    border-radius: 3px;
}

.task.running::after {
    width: 10px;
    background: #a6abc9;
}

.task.active {
    background: #14205c;
    box-shadow: 0 0 0 1px #222d68, 6px 0 0 0 #14205a;
}

.task.active::after {
    width: 24px;
    background: #5cc4ff;
}

.tray {
    flex: 1;
    display: flex;
    align-items: center;
    justify-content: flex-end;
    padding-right: 28px;
}

.chevron svg {
    width: 18px;
    height: 12px;
}

.ime {
    margin: 0 26px 0 28px;
    font-size: 21px;
}

.status-icons {
    display: flex;
    gap: 12px;
    margin-right: 22px;
}

.status-icons svg {
    width: 24px;
    height: 24px;
}

.clock {
    position: relative;
    display: flex;
    flex-direction: column;
    align-items: flex-end;
    font-size: 18px;
    line-height: 25px;
}

/* Overlaid on the date */
.watermark {
    position: absolute;
    right: -12px;
    bottom: -4px;
    color: #b9bcc2;
    font-family: "Liberation Sans", "Noto Sans CJK SC", sans-serif;
    white-space: nowrap;
}
```
